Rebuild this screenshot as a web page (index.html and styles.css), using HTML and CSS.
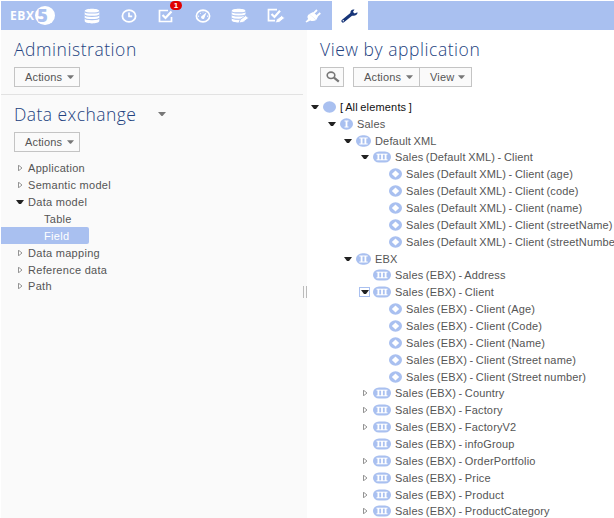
FILE: index.html
```html
<!DOCTYPE html>
<html lang="en">
<head>
<meta charset="utf-8">
<title>EBX5 Administration</title>
<link rel="stylesheet" href="styles.css">
</head>
<body>
<svg class="defs" width="0" height="0">
  <symbol id="all" viewBox="0 0 13 12"><ellipse cx="6.5" cy="6" rx="6.5" ry="5.8" fill="#a9c0f0"/></symbol>
  <symbol id="one" viewBox="0 0 13 12"><ellipse cx="6.5" cy="6" rx="6.5" ry="5.8" fill="#a9c0f0"/><path d="M4.5 3h4M4.5 9h4" stroke="#fff" fill="none"/><path d="M6.5 3v6" stroke="#fff" stroke-width="1.8"/></symbol>
  <symbol id="two" viewBox="0 0 15 12"><rect y=".2" width="15" height="11.6" rx="6.5" ry="5.8" fill="#a9c0f0"/><path d="M3.3 3h8.4M3.3 9h8.4" stroke="#fff" fill="none"/><path d="M5.6 3v6M9.4 3v6" stroke="#fff" stroke-width="1.8"/></symbol>
  <symbol id="three" viewBox="0 0 18 12"><rect y=".4" width="18" height="11.2" rx="6" ry="5.6" fill="#a9c0f0"/><path d="M3.5 3.2h11M3.5 8.8h11" stroke="#fff" fill="none"/><path d="M5.4 3v6M9 3v6M12.6 3v6" stroke="#fff" stroke-width="1.8"/></symbol>
  <symbol id="leaf" viewBox="0 0 13 12"><ellipse cx="6.5" cy="6" rx="6.5" ry="5.7" fill="#a9c0f0"/><path d="M6.5 2.5 10.2 6 6.5 9.5 2.8 6Z" fill="#fff"/></symbol>
  <symbol id="open" viewBox="0 0 8 6"><path d="M0 1h8L5 5H3Z" fill="#222"/></symbol>
  <symbol id="closed" viewBox="0 0 8 6"><path d="M2.5.2v5.6L6 3Z" fill="#fff" stroke="#888" stroke-width=".9"/></symbol>
  <symbol id="caret" viewBox="0 0 8 4"><path d="M0 0h8L4.5 4h-1Z" fill="#777"/></symbol>
</svg>

<header class="topbar">
  <div class="logo"><span>EBX</span><b>5</b></div>
  <nav class="nav">
    <a><svg width="16" height="16" viewBox="0 0 16 16"><path d="M.7 3.2C.7 0 15.3 0 15.3 3.2v9.9c0 3.2-14.6 3.2-14.6 0Z" fill="#fff"/><path d="M.5 3.4c1 2.2 14 2.2 15 0M.5 6.7c1 2.2 14 2.2 15 0M.5 10c1 2.2 14 2.2 15 0" fill="none" stroke="#a9c0f0" stroke-width="1.1"/></svg></a>
    <a><svg width="16" height="14" viewBox="0 0 16 14"><ellipse cx="8" cy="7" rx="6.6" ry="5.9" fill="none" stroke="#fff" stroke-width="1.8"/><path d="M8 3.5V7.4h3.2" fill="none" stroke="#fff" stroke-width="1.7"/></svg></a>
    <a class="tasks"><svg width="16" height="14" viewBox="0 0 16 14"><path d="M10 1.5H1.5v11h12V8" fill="none" stroke="#fff" stroke-width="1.7"/><path d="m4.5 6 3 3 6-6.5" fill="none" stroke="#fff" stroke-width="2.2"/></svg><i class="badge">1</i></a>
    <a><svg width="16" height="14" viewBox="0 0 16 14"><ellipse cx="8" cy="7" rx="6.6" ry="5.9" fill="none" stroke="#fff" stroke-width="1.7"/><path d="M6.2 7.5 11.5 3.2 9.3 9.2C8.3 11 5.4 9.7 6.2 7.5Z" fill="#fff"/><path d="M3.5 8V6.5M5 4l1 .8M8 2.5v1M12.5 8V6.5" stroke="#fff" stroke-width=".8"/></svg></a>
    <a><svg width="18" height="16" viewBox="0 0 18 16"><path d="M.7 3C.7.1 14.5.1 14.5 3v9.3c0 3-13.8 3-13.8 0Z" fill="#fff"/><path d="M.5 3.4c1 2 13.3 2 14.3 0M.5 6.5c1 2 13.3 2 14.3 0M.5 9.7c1 2 13.3 2 14.3 0" fill="none" stroke="#a9c0f0" stroke-width="1.1"/><path d="m8 15 1.3-3.5 5.4-4 3 2.6-5.6 4.2Z" fill="#fff" stroke="#a9c0f0" stroke-width=".9"/></svg></a>
    <a><svg width="18" height="16" viewBox="0 0 18 16"><path d="M10 1.7H1.5v11H8" fill="none" stroke="#fff" stroke-width="1.7"/><path d="m4.5 6 3 3L13 2.8" fill="none" stroke="#fff" stroke-width="2.2"/><path d="m8.2 15 1.3-3.5 5.2-4 3 2.6-5.4 4.2Z" fill="#fff" stroke="#a9c0f0" stroke-width=".9"/></svg></a>
    <a><svg width="16" height="14" viewBox="0 0 16 14"><path d="m4.3 5 6.9 6c-2 1.3-4.3 1.4-6 .5L1.5 13.5.5 12.8l2.6-2.9C1.9 8.2 2.4 6.2 4.3 5Z" fill="#fff"/><path d="m4.3 5 6.9 6 1.9-3.5-5-4.5Z" fill="#fff"/><path d="M8.8 4.2 12 1M12 7l3.3-3" stroke="#fff" stroke-width="1.8"/></svg></a>
    <a class="current"><svg width="17" height="14" viewBox="0 0 17 14"><path d="M2 12 11 4.8" stroke="#173578" stroke-width="3.1" stroke-linecap="round"/><path d="M13.5.5C11 0 9 1.8 9.5 4.2L11 6.5c2.7.7 5.8-.5 5.5-3.3l-2.8 1.4-1.8-1.5Z" fill="#173578"/><circle cx="2.3" cy="11.8" r=".7" fill="#fff"/></svg></a>
  </nav>
</header>

<main class="panes">
  <aside class="left">
    <section class="admin">
      <h1 class="t-admin">Administration</h1>
      <button class="btn">Actions<svg width="7" height="4"><use href="#caret"/></svg></button>
    </section>
    <section class="exchange">
      <h1 class="t-exchange">Data exchange<svg width="8" height="4"><use href="#caret"/></svg></h1>
      <button class="btn">Actions<svg width="7" height="4"><use href="#caret"/></svg></button>
      <ul class="menu">
        <li><svg><use href="#closed"/></svg>Application</li>
        <li><svg><use href="#closed"/></svg>Semantic model</li>
        <li><svg><use href="#open"/></svg>Data model</li>
        <li class="sub">Table</li>
        <li class="sub selected">Field</li>
        <li><svg><use href="#closed"/></svg>Data mapping</li>
        <li><svg><use href="#closed"/></svg>Reference data</li>
        <li><svg><use href="#closed"/></svg>Path</li>
      </ul>
    </section>
  </aside>
  <div class="splitter"><i></i></div>
  <section class="right">
    <h1 class="t-view">View by application</h1>
    <div class="toolbar">
      <button class="btn search"><svg width="14" height="12" viewBox="0 0 14 12"><ellipse cx="5" cy="4.3" rx="3.8" ry="3.2" fill="none" stroke="#777" stroke-width="1.6"/><path d="m8 6.7 4.8 4" stroke="#777" stroke-width="2.2"/></svg></button>
      <div class="group"><button class="btn">Actions<svg width="7" height="4"><use href="#caret"/></svg></button><button class="btn view">View<svg width="7" height="4"><use href="#caret"/></svg></button></div>
    </div>
    <ul class="tree">
      <li class="l0"><span class="tog"><svg><use href="#open"/></svg></span><svg class="ic"><use href="#all"/></svg>[ All elements ]</li>
      <li class="l1"><span class="tog"><svg><use href="#open"/></svg></span><svg class="ic"><use href="#one"/></svg>Sales</li>
      <li class="l2"><span class="tog"><svg><use href="#open"/></svg></span><svg class="ic"><use href="#two"/></svg>Default XML</li>
      <li class="l3"><span class="tog"><svg><use href="#open"/></svg></span><svg class="ic"><use href="#three"/></svg>Sales (Default XML) - Client</li>
      <li class="l4"><svg class="ic"><use href="#leaf"/></svg>Sales (Default XML) - Client (age)</li>
      <li class="l4"><svg class="ic"><use href="#leaf"/></svg>Sales (Default XML) - Client (code)</li>
      <li class="l4"><svg class="ic"><use href="#leaf"/></svg>Sales (Default XML) - Client (name)</li>
      <li class="l4"><svg class="ic"><use href="#leaf"/></svg>Sales (Default XML) - Client (streetName)</li>
      <li class="l4"><svg class="ic"><use href="#leaf"/></svg>Sales (Default XML) - Client (streetNumber)</li>
      <li class="l2"><span class="tog"><svg><use href="#open"/></svg></span><svg class="ic"><use href="#two"/></svg>EBX</li>
      <li class="l3"><span class="tog"></span><svg class="ic"><use href="#three"/></svg>Sales (EBX) - Address</li>
      <li class="l3"><span class="tog focus"><svg><use href="#open"/></svg></span><svg class="ic"><use href="#three"/></svg>Sales (EBX) - Client</li>
      <li class="l4"><svg class="ic"><use href="#leaf"/></svg>Sales (EBX) - Client (Age)</li>
      <li class="l4"><svg class="ic"><use href="#leaf"/></svg>Sales (EBX) - Client (Code)</li>
      <li class="l4"><svg class="ic"><use href="#leaf"/></svg>Sales (EBX) - Client (Name)</li>
      <li class="l4"><svg class="ic"><use href="#leaf"/></svg>Sales (EBX) - Client (Street name)</li>
      <li class="l4"><svg class="ic"><use href="#leaf"/></svg>Sales (EBX) - Client (Street number)</li>
      <li class="l3"><span class="tog"><svg><use href="#closed"/></svg></span><svg class="ic"><use href="#three"/></svg>Sales (EBX) - Country</li>
      <li class="l3"><span class="tog"><svg><use href="#closed"/></svg></span><svg class="ic"><use href="#three"/></svg>Sales (EBX) - Factory</li>
      <li class="l3"><span class="tog"><svg><use href="#closed"/></svg></span><svg class="ic"><use href="#three"/></svg>Sales (EBX) - FactoryV2</li>
      <li class="l3"><span class="tog"></span><svg class="ic"><use href="#three"/></svg>Sales (EBX) - infoGroup</li>
      <li class="l3"><span class="tog"><svg><use href="#closed"/></svg></span><svg class="ic"><use href="#three"/></svg>Sales (EBX) - OrderPortfolio</li>
      <li class="l3"><span class="tog"><svg><use href="#closed"/></svg></span><svg class="ic"><use href="#three"/></svg>Sales (EBX) - Price</li>
      <li class="l3"><span class="tog"><svg><use href="#closed"/></svg></span><svg class="ic"><use href="#three"/></svg>Sales (EBX) - Product</li>
      <li class="l3"><span class="tog"><svg><use href="#closed"/></svg></span><svg class="ic"><use href="#three"/></svg>Sales (EBX) - ProductCategory</li>
    </ul>
  </section>
</main>
</body>
</html>
```
FILE: styles.css
```css
* { box-sizing: border-box; }
body {
  margin: 0;
  width: 614px;
  height: 518px;
  overflow: hidden;
  padding: 1px 0 0 1px;
  background: #fff;
  font: 11px "Liberation Sans", Arial, sans-serif;
  letter-spacing: .29px;
  color: #555;
}
.defs { position: absolute; }
svg { display: block; flex: none; }
ul { list-style: none; margin: 0; padding: 0; }

.topbar { display: flex; height: 29px; background: #a9c0f0; }
.logo {
  display: flex;
  align-items: center;
  width: 73px;
  padding-left: 9px;
  color: #fff;
  font: bold 12px "Open Sans", sans-serif;
  letter-spacing: .6px;
}
.logo b {
  width: 20px;
  height: 19px;
  padding-right: 4px;
  border-radius: 50%;
  background: #fff;
  color: #a9c0f0;
  font-size: 18px;
  line-height: 18px;
  letter-spacing: 0;
  text-align: center;
}
.nav { display: flex; }
.nav a {
  display: flex;
  align-items: center;
  justify-content: center;
  width: 36.8px;
}
.nav .current { background: #fff; }
.tasks { position: relative; }
.badge {
  position: absolute;
  left: 22.5px;
  top: 0;
  width: 12px;
  height: 9px;
  border-radius: 5px;
  background: #e00000;
  color: #fff;
  font: bold 8px/9px "Liberation Sans", sans-serif;
  letter-spacing: 0;
  text-align: center;
}

.panes { display: flex; height: 488px; }
.left { width: 302px; background: #fafafa; }
.splitter { display: flex; align-items: center; width: 4px; padding: 36px 0 0 0; background: #fafafa; }
.splitter i { width: 4px; height: 12px; border: solid #bbb; border-width: 0 1px; }
.right { flex: 1; padding: 8px 0 0 13px; white-space: nowrap; overflow: hidden; }

h1 {
  display: flex;
  align-items: center;
  margin: 0;
  height: 22px;
  font: 300 17.5px/22px "Open Sans", sans-serif;
  color: #23427f;
}
.t-admin { letter-spacing: .55px; }
.t-exchange { letter-spacing: .45px; }
.t-exchange svg { margin-left: 22px; }
.t-view { letter-spacing: .55px; }

.admin { height: 65px; padding: 8px 0 0 13px; border-bottom: 1px solid #e2e2e2; }
.admin .btn { margin-top: 7px; }
.exchange { padding: 8px 0 0 13px; }
.exchange .btn { margin-top: 7px; }

.btn {
  display: flex;
  align-items: center;
  justify-content: space-between;
  width: 66px;
  height: 20px;
  padding: 0 5px 0 10px;
  border: 1px solid #c4c4c4;
  background: #fafafa;
  font: inherit;
  letter-spacing: .15px;
  color: #555;
}
.toolbar { display: flex; gap: 9px; margin-top: 7px; }
.toolbar .btn { padding-right: 6px; }
.toolbar .search { width: 24px; padding: 0 5px; }
.group { display: flex; }
.group .btn { width: 67px; }
.group .view { width: 53px; margin-left: -1px; }

.menu { margin: 8px 0 0 -13px; }
.menu li { display: flex; align-items: center; height: 16.86px; padding-left: 15px; }
.menu svg { width: 8px; height: 6px; margin-right: 4px; }
.menu .sub { padding-left: 43px; }
.menu .selected { width: 88px; background: #a9c0f0; color: #fff; border-radius: 0 2px 2px 0; }

.tree { margin: 11.4px 0 0 -13px; letter-spacing: .16px; word-spacing: -.7px; }
.tree li { display: flex; align-items: center; height: 16.86px; }
.tog { display: flex; align-items: center; justify-content: center; width: 11px; height: 10px; margin-right: 3px; }
.tog svg { width: 8px; height: 6px; }
.focus { border: 1px solid #a9c0f0; }
.ic { width: 13px; height: 12px; margin-right: 4px; }
.l0 { padding-left: 2px; color: #111; }
.l1 { padding-left: 19px; }
.l2 { padding-left: 35px; }
.l3 { padding-left: 52px; }
.l4 { padding-left: 82px; }
.l2 .ic { width: 15px; }
.l3 .ic { width: 18px; }
```
